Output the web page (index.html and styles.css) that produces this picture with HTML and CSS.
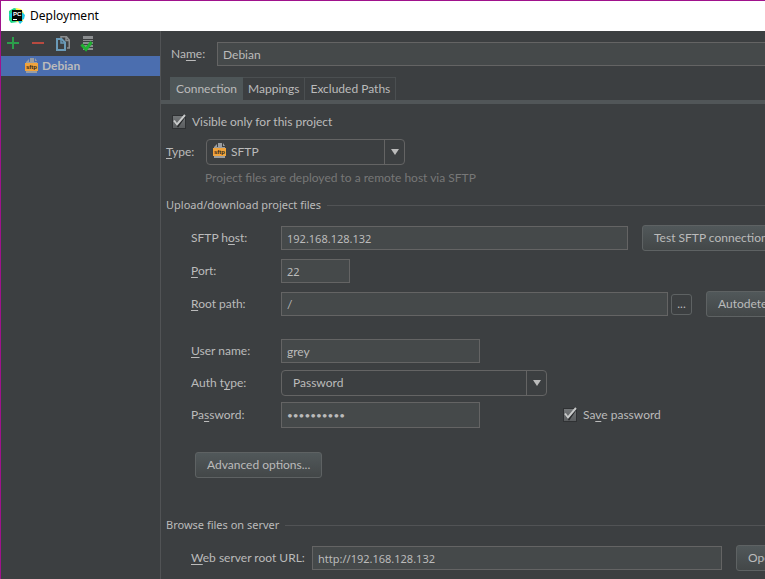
FILE: index.html
```html
<!DOCTYPE html>
<html lang="en">
<head>
<meta charset="utf-8">
<title>Deployment</title>
<link rel="stylesheet" href="styles.css">
</head>
<body>
<div class="window">
  <header class="titlebar">
    <svg class="app-icon" viewBox="0 0 16 16" aria-hidden="true">
      <path fill="#21d789" d="M0 3l5-3 4 1v13l-7 1-2-3z"/>
      <path fill="#fcf84a" d="M7 0l5 1 3 4-1 8-3 2-5-2z"/>
      <path fill="#1cc8e8" d="M13 4l3 3-1 4-2 1zM0 6l3-1v5l-2-1zM9 13h5l-3 3z"/>
      <path fill="#050505" d="M3 2h10v11H3z"/>
      <text class="app-text" x="4" y="8">PC</text>
      <path fill="#fff" d="M4 11h4v1H4z"/>
    </svg>
    <h1 class="title">Deployment</h1>
  </header>
  <div class="content">
    <aside class="sidebar">
      <div class="toolbar">
        <button class="tool" aria-label="Add"><svg viewBox="0 0 16 16"><path fill="#2c9f4b" d="M7 1h2v5h5v2H9v5H7V8H2V6h5z"/></svg></button>
        <button class="tool" aria-label="Remove"><svg viewBox="0 0 16 16"><path fill="#b84a40" d="M2 6h12v2H2z"/></svg></button>
        <button class="tool" aria-label="Copy"><svg viewBox="0 0 16 16"><path fill="none" stroke="#8b8e90" stroke-width="1.500" d="M6 2V.75h5.500L14.250 4v8H12M11 1v3.500h3"/><path fill="#3c3f41" stroke="#6a9ab8" stroke-width="2" d="M2 3h4.500L10 6.500V14H2z"/><path fill="none" stroke="#6a9ab8" stroke-width="1.500" d="M6 3v4h4"/></svg></button>
        <button class="tool" aria-label="Use as default"><svg viewBox="0 0 16 16"><path fill="#8b8e90" d="M3 0h10v3H3zM3 4h10v1H3zM3 6h10v2H3zM3 9h10v2H3zM3 12h10v2H3z"/><path fill="none" stroke="#1fb131" stroke-width="3" d="M1.500 8.500l4.500 5 5.500-7.500"/></svg></button>
      </div>
      <ul class="servers">
        <li class="server">
          <svg class="file-icon" viewBox="0 0 14 16" aria-hidden="true">
            <path fill="#9a9da0" d="M1 4l3-3v3zM5 0h4v4h3v11H1v-2h9V5H1V4h4zM1 5h2v9H1zM10 0l2 3h-2z"/>
            <path fill="#f0a33c" d="M0 5h13v8H0z"/>
            <text class="icon-text" x="1" y="11">sftp</text>
          </svg>Debian</li>
      </ul>
    </aside>
    <main class="main">
      <form class="settings">
        <div class="row name-row">
          <label for="name">Na<u>m</u>e:</label>
          <input class="field grow" id="name" value="Debian">
        </div>
        <div class="tabs" role="tablist">
          <button type="button" class="tab active" role="tab" aria-selected="true">Connection</button>
          <button type="button" class="tab" role="tab">Mappings</button>
          <button type="button" class="tab" role="tab">Excluded Paths</button>
        </div>
        <div class="panel">
          <label class="check visible-check">
            <span class="box"><input type="checkbox" checked><svg viewBox="0 0 16 16" aria-hidden="true"><path fill="none" stroke="#292b2d" stroke-width="2" d="M4 8l3 4 7-10"/><path fill="none" stroke="#c8caca" stroke-width="2" d="M3 6.500l3 4L14 1"/></svg></span>
            <span>Visible only for this project</span>
          </label>
          <div class="row type-row">
            <label for="type"><u>T</u>ype:</label>
            <span class="combo type">
              <svg class="file-icon" viewBox="0 0 14 16" aria-hidden="true">
                <path fill="#9a9da0" d="M1 4l3-3v3zM5 0h4v4h3v11H1v-2h9V5H1V4h4zM1 5h2v9H1zM10 0l2 3h-2z"/>
                <path fill="#f0a33c" d="M0 5h13v8H0z"/>
                <text class="icon-text" x="1" y="11">sftp</text>
              </svg>
              <select id="type"><option>SFTP</option></select>
              <span class="arrow"></span>
            </span>
          </div>
          <p class="hint">Project files are deployed to a remote host via SFTP</p>
          <h2 class="section">Upload/download project files</h2>
          <div class="group">
            <div class="row">
              <label class="caption" for="host">SFTP h<u>o</u>st:</label>
              <input class="field grow address" id="host" value="192.168.128.132">
              <button type="button" class="button test">Test SFTP connection...</button>
            </div>
            <div class="row">
              <label class="caption" for="port"><u>P</u>ort:</label>
              <input class="field port address" id="port" value="22">
            </div>
            <div class="row">
              <label class="caption" for="root"><u>R</u>oot path:</label>
              <input class="field grow" id="root" value="/">
              <button type="button" class="browse" aria-label="Browse">...</button>
              <button type="button" class="button detect">Autodetect</button>
            </div>
          </div>
          <div class="group login">
            <div class="row">
              <label class="caption" for="user"><u>U</u>ser name:</label>
              <input class="field medium" id="user" value="grey">
            </div>
            <div class="row">
              <label class="caption" for="auth">Auth t<u>y</u>pe:</label>
              <span class="combo auth"><select id="auth"><option>Password</option></select><span class="arrow"></span></span>
            </div>
            <div class="row">
              <label class="caption" for="password">Pa<u>s</u>sword:</label>
              <input class="field medium secret" type="password" id="password" value="0123456789">
              <label class="check save-check">
                <span class="box"><input type="checkbox" checked><svg viewBox="0 0 16 16" aria-hidden="true"><path fill="none" stroke="#292b2d" stroke-width="2" d="M4 8l3 4 7-10"/><path fill="none" stroke="#c8caca" stroke-width="2" d="M3 6.500l3 4L14 1"/></svg></span>
                <span>Sa<u>v</u>e password</span>
              </label>
            </div>
          </div>
          <button type="button" class="button advanced">Advanced options...</button>
          <h2 class="section">Browse files on server</h2>
          <div class="group">
            <div class="row">
              <label class="caption wide" for="url"><u>W</u>eb server root URL:</label>
              <input class="field grow address" id="url" value="http://192.168.128.132">
              <button type="button" class="button open">Open</button>
            </div>
          </div>
        </div>
      </form>
    </main>
  </div>
</div>
</body>
</html>
```
FILE: styles.css
```css
* { box-sizing: border-box; }

body {
  margin: 0;
  overflow: hidden;
  background: #3c3f41;
  color: #bbbbbb;
  font: 12px/16px Lato, "Noto Sans", sans-serif;
}

button, input, select { font: inherit; color: inherit; margin: 0; }
u { text-underline-offset: 2px; }
.icon-text { font: 700 6px "Liberation Sans", sans-serif; fill: #30261a; }
.app-text { font: 700 6px "Liberation Sans", sans-serif; fill: #fff; }

.window {
  min-height: 100vh;
  display: flex;
  flex-direction: column;
  border-left: 1px solid #a0128c;
  border-top: 1px solid #a0128c;
}

.titlebar {
  display: flex;
  align-items: center;
  gap: 5px;
  height: 30px;
  padding-left: 8px;
  background: #fff;
  color: #000;
}
.app-icon { width: 16px; height: 16px; }
.title { margin: 0; font: 12px/16px "Noto Sans", sans-serif; }

.content { display: flex; flex: 1; }
.sidebar { width: 160px; flex: none; border-right: 1px solid #515355; }

.toolbar { display: flex; gap: 9px; height: 25px; align-items: center; padding-left: 4px; }
.tool { width: 16px; height: 16px; padding: 0; border: 0; background: none; }
.tool svg { display: block; width: 16px; height: 16px; }

.servers { margin: 0; padding: 0; list-style: none; }
.server {
  display: flex;
  align-items: center;
  gap: 3px;
  height: 20px;
  padding-left: 24px;
  background: #4b6eaf;
  font-weight: 700;
}
.file-icon { width: 14px; height: 16px; flex: none; }

.main { flex: 1; min-width: 0; overflow: hidden; }
.settings { margin-right: -25px; padding-top: 11px; }
.row { display: flex; align-items: center; }

.field {
  min-width: 0;
  height: 24px;
  padding: 0 5px;
  border: 1px solid #646464;
  border-radius: 0;
  background: #45494a;
  outline: 0;
}
.grow { flex: 1; }
.address { font: 11px/16px "Noto Sans", sans-serif; }
.name-row { padding-left: 10px; }
.name-row label { width: 46px; }

.tabs {
  display: flex;
  margin-top: 11px;
  padding-left: 9px;
  border-bottom: 4px solid #515658;
}
.tab {
  height: 23px;
  padding: 0 5px;
  border: 1px solid #4b4f51;
  border-left: 0;
  border-bottom: 0;
  background: #3c3f41;
}
.tab.active { padding: 0 5px 0 6px; border-color: #4e5658; background: #4e5658; }

.panel { padding: 10px 8px 10px 5px; }
.check { display: flex; align-items: center; }
.visible-check { gap: 5px; padding-left: 5px; }
.box { position: relative; width: 16px; height: 16px; }
.box input {
  appearance: none;
  display: block;
  width: 14px;
  height: 14px;
  margin: 1px;
  border: 1px solid #2f3133;
  background: linear-gradient(#737678, #5a5d5f);
}
.box svg { position: absolute; inset: 0; width: 16px; height: 16px; pointer-events: none; }

.type-row { margin-top: 9px; }
.type-row label { width: 40px; }
.combo {
  position: relative;
  display: flex;
  height: 26px;
  border: 1px solid #646464;
  border-radius: 4px;
}
.combo select {
  appearance: none;
  flex: 1;
  min-width: 0;
  padding: 0 11px;
  border: 0;
  background: none;
  outline: 0;
}
.combo .file-icon { position: absolute; left: 6px; top: 3px; }
.type { width: 199px; }
.type select { padding-left: 24px; }
.auth { width: 266px; }
.arrow {
  width: 20px;
  display: grid;
  place-items: center;
  border-left: 1px solid #646464;
  pointer-events: none;
}
.arrow::before {
  content: "";
  border: 4px solid transparent;
  border-top: 6px solid #bbbbbb;
  border-bottom: 0;
}

.hint { margin: 5px 0 11px 39px; color: #777777; }
.section {
  display: flex;
  align-items: center;
  gap: 6px;
  margin: 0;
  font: 11px/16px "Noto Sans", sans-serif;
}
.section::after { content: ""; flex: 1; border-top: 1px solid #515355; }

.group { display: grid; gap: 7px; margin-top: 12px; padding-left: 25px; }
.group .row { height: 26px; }
.caption { width: 90px; flex: none; }
.wide { width: 121px; }
.port { width: 69px; }
.medium { width: 199px; }
.login { margin-top: 21px; gap: 6px; }
.secret { height: 26px; font-size: 10px; }
.save-check { gap: 5px; margin-left: 82px; }

.button, .browse {
  flex: none;
  border: 1px solid #5e6263;
  border-radius: 3px;
  background: linear-gradient(#51585a, #434748);
}
.button { height: 26px; margin-left: 14px; padding: 0 11px; text-align: left; }
.browse { width: 21px; height: 21px; margin-left: 3px; padding: 0; line-height: 12px; background: none; }
.test { width: 140px; white-space: nowrap; }
.detect { width: 76px; }
.open { width: 46px; }
.advanced { display: block; margin: 24px 0 39px 29px; }
```
